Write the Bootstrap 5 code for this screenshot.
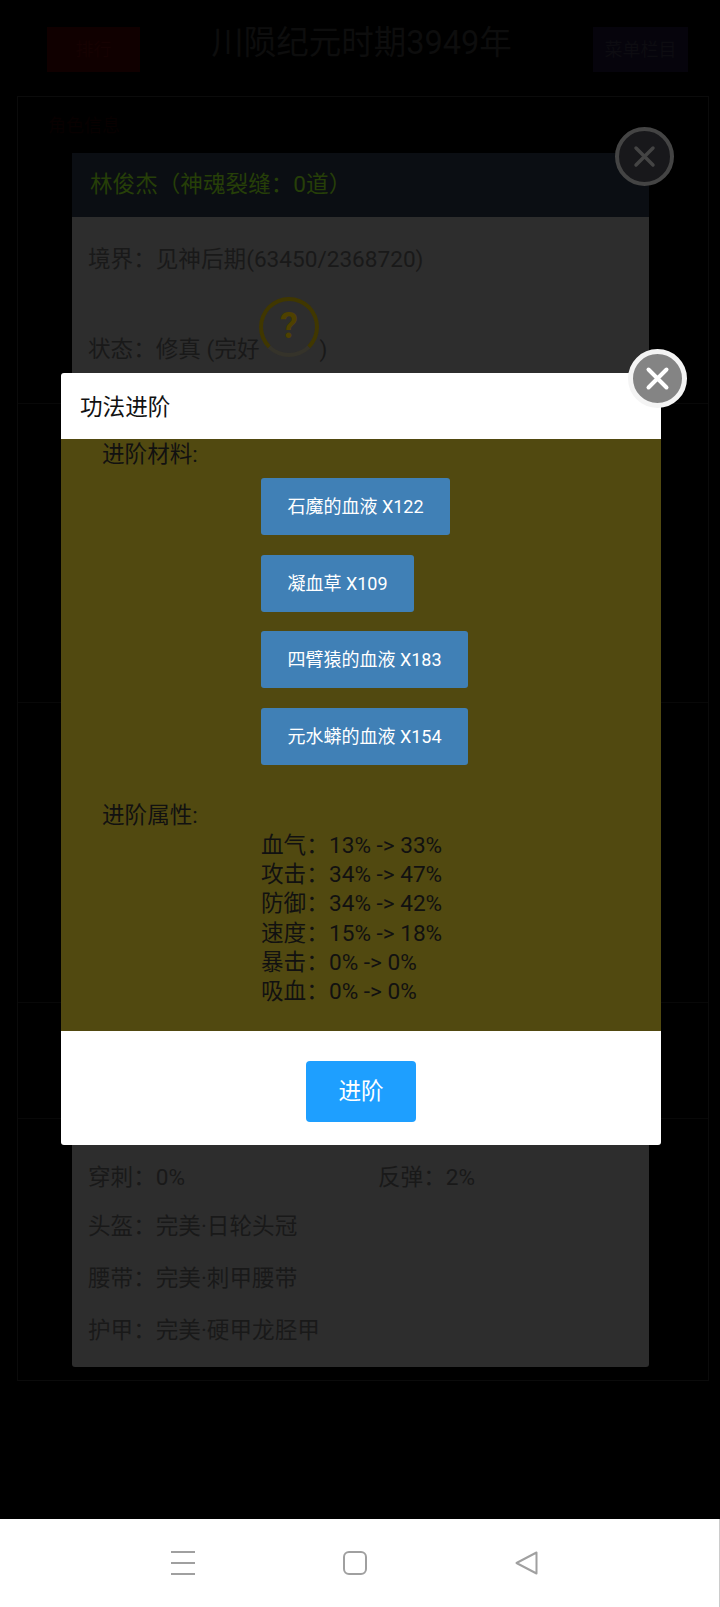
<!DOCTYPE html>
<html lang="zh">
<head>
<meta charset="utf-8">
<title>功法进阶</title>
<link href="https://cdn.jsdelivr.net/npm/bootstrap@5.3.0/dist/css/bootstrap.min.css" rel="stylesheet">
<style>
html,body{margin:0;padding:0;height:1607px;overflow:hidden;background:#000}
body{font-family:Roboto,"Noto Sans CJK SC",sans-serif;font-size:22.6px;color:#111}
.stage{position:relative;height:1519px;background:#000;overflow:hidden}
.topbar{height:96px;padding:27px 32px 0 47px}
.topbtn{height:45px;font-size:18px;display:flex;align-items:center;justify-content:center}
.topbtn-red{width:93px;background:#100000;color:#160202}
.topbtn-blue{width:95px;background:#06040c;color:#0d0c11}
.era{flex:1;text-align:center;font-size:32.5px;line-height:34px;color:#0d0d0d;margin-top:-1px;padding-right:10px}
.outerbox{margin:0 11px 0 17px;border:1px solid #0b0b0b;height:1285px}
.sect{border-bottom:1px solid #080808;padding:15px 30px;font-size:18px;color:#080000}
.sect:last-child{border-bottom:0}
.h1s{height:307px}.h2s{height:299px}.h3s{height:300px}.h4s{height:116px}
.dimsheet{position:absolute;left:72px;top:153px;width:577px;height:1214px;background:#2d2d2d;border-radius:0 0 3px 3px;color:#191919}
.dimhead{height:64px;background:#0b0e13;color:#263f08;padding:0 18px;line-height:64px;font-size:22.6px}
.dimline{position:absolute;left:16px;line-height:30px;white-space:nowrap}
.dimcol{position:absolute;left:306px;line-height:30px;white-space:nowrap}
.gap-slot{display:inline-block;width:60px}
.qmark{position:absolute;left:187px;top:144px;width:60px;height:60px;border-radius:50%;border:4px solid #403700;border-bottom-color:#35332a;color:#4f4100;font-size:36px;font-weight:700;line-height:50px;text-align:center}
.closer{position:absolute;width:59px;height:59px;border-radius:50%;display:flex;align-items:center;justify-content:center}
.closer-dim{left:615px;top:127px;background:#18181b;border:4px solid #444}
.closer-top{left:628px;top:349px;background:#848484;border:5px solid #f4f4f4;z-index:3}
.sheet{position:absolute;left:61px;top:373px;width:600px;z-index:2;border:0;border-radius:3px;background:#fff;overflow:hidden}
.sheet .modal-header{height:66px;padding:3px 19px 0;border:0;border-radius:0;font-size:22.6px;color:#111}
.sheet .modal-body{height:592px;padding:0 0 0 41px;background:#514910;flex:none}
.sheet .modal-footer{height:114px;padding:30px 0 0;border:0;justify-content:center;align-items:flex-start}
.lbl{line-height:30px;padding-top:1px}
.mats{margin:8px 0 0 159px;gap:19.6px;align-items:flex-start}
.btn.matbtn{height:57px;padding:0 26.5px;border:0;border-radius:3px;background:#4080b6;color:#fff;font-size:18px;line-height:55px;white-space:nowrap}
.attr-lbl{margin-top:35px}
.attrs{margin:0 0 0 159px;line-height:29.3px}
.attrs>div{white-space:nowrap}
.attrs .nm{display:inline-block;width:68px}
.btn.goup{width:110px;height:61px;margin:0;padding:0;border:0;border-radius:4px;background:#1e9fff;color:#fff;font-size:22.6px}
.navbar-soft{height:88px;background:#fff;border-right:1px solid #ccc;padding-top:32px}
.navslot{position:absolute;top:0;display:block}
.navwrap{position:relative;height:26px;width:100%}
</style>
</head>
<body>
<div class="stage">
  <div class="topbar d-flex align-items-start">
    <div class="topbtn topbtn-red">排行</div>
    <div class="era">川陨纪元时期3949年</div>
    <div class="topbtn topbtn-blue">菜单栏目</div>
  </div>
  <div class="outerbox">
    <div class="sect h1s">角色信息</div>
    <div class="sect h2s"></div>
    <div class="sect h3s"></div>
    <div class="sect h4s"></div>
    <div class="sect"></div>
  </div>

  <div class="dimsheet">
    <div class="dimhead">林俊杰&#xFF08;神魂裂缝&#xFF1A;0道&#xFF09;</div>
    <div class="dimline" style="top:92px">境界&#xFF1A;见神后期(63450/2368720)</div>
    <div class="dimline" style="top:182px">状态&#xFF1A;修真 (完好<span class="gap-slot"></span>)</div>
    <div class="qmark">?</div>
    <div class="dimline" style="top:1010px">穿刺&#xFF1A;0%</div>
    <div class="dimcol" style="top:1010px">反弹&#xFF1A;2%</div>
    <div class="dimline" style="top:1059px">头盔&#xFF1A;完美·日轮头冠</div>
    <div class="dimline" style="top:1111px">腰带&#xFF1A;完美·刺甲腰带</div>
    <div class="dimline" style="top:1163px">护甲&#xFF1A;完美·硬甲龙胫甲</div>
  </div>
  <div class="closer closer-dim">
    <svg width="25" height="25" viewBox="0 0 25 25"><path d="M4 4L21 21M21 4L4 21" stroke="#444" stroke-width="3.5" stroke-linecap="round"/></svg>
  </div>

  <div class="modal-content sheet">
    <div class="modal-header">功法进阶</div>
    <div class="modal-body">
      <div class="lbl">进阶材料:</div>
      <div class="mats d-flex flex-column">
        <button class="btn matbtn">石魔的血液 X122</button>
        <button class="btn matbtn">凝血草 X109</button>
        <button class="btn matbtn">四臂猿的血液 X183</button>
        <button class="btn matbtn">元水蟒的血液 X154</button>
      </div>
      <div class="lbl attr-lbl">进阶属性:</div>
      <div class="attrs">
        <div><span class="nm">血气&#xFF1A;</span>13% -&gt; 33%</div>
        <div><span class="nm">攻击&#xFF1A;</span>34% -&gt; 47%</div>
        <div><span class="nm">防御&#xFF1A;</span>34% -&gt; 42%</div>
        <div><span class="nm">速度&#xFF1A;</span>15% -&gt; 18%</div>
        <div><span class="nm">暴击&#xFF1A;</span>0% -&gt; 0%</div>
        <div><span class="nm">吸血&#xFF1A;</span>0% -&gt; 0%</div>
      </div>
    </div>
    <div class="modal-footer"><button class="btn goup">进阶</button></div>
  </div>
  <div class="closer closer-top">
    <svg width="25" height="25" viewBox="0 0 25 25"><path d="M3.5 3.5L21.5 21.5M21.5 3.5L3.5 21.5" stroke="#fff" stroke-width="4" stroke-linecap="round"/></svg>
  </div>
</div>
<div class="navbar-soft">
  <div class="navwrap">
    <svg class="navslot" style="left:171px" width="24" height="24" viewBox="0 0 24 24"><path d="M0 1H24M0 12H24M0 23H24" stroke="#a0a0a0" stroke-width="2"/></svg>
    <svg class="navslot" style="left:343px" width="24" height="24" viewBox="0 0 24 24"><rect x="1" y="1" width="22" height="22" rx="5" fill="none" stroke="#a0a0a0" stroke-width="2"/></svg>
    <svg class="navslot" style="left:515px" width="23" height="24" viewBox="0 0 23 24"><path d="M21.5 1.5V22.5L1.5 12Z" fill="none" stroke="#a0a0a0" stroke-width="2" stroke-linejoin="round"/></svg>
  </div>
</div>
<script src="https://cdn.jsdelivr.net/npm/bootstrap@5.3.0/dist/js/bootstrap.bundle.min.js"></script>
</body>
</html>
